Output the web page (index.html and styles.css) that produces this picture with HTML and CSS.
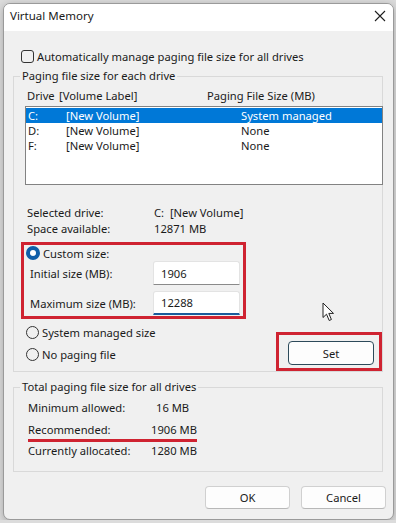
FILE: index.html
```html
<!DOCTYPE html>
<html lang="en">
<head>
    <meta charset="UTF-8">
    <meta name="viewport" content="width=device-width, initial-scale=1.0">
    <title>Virtual Memory</title>
    <link rel="stylesheet" href="styles.css">
</head>
<body>

    <div class="window">
        <!-- Barra de titulo -->
        <div class="titlebar">
            <span class="title">Virtual Memory</span>
            <svg class="close" width="12" height="12" viewBox="0 0 12 12">
                <path d="M1 1 L11 11 M11 1 L1 11" stroke="#1f1f1f" stroke-width="1.1" fill="none"/>
            </svg>
        </div>

        <div class="content">
            <div class="check-row"><span class="checkbox"></span>Automatically manage paging file size for all drives</div>

            <!-- Grupo: cada drive -->
            <fieldset class="group group-drive">
                <legend>Paging file size for each drive</legend>

                <div class="list-head">
                    <span class="col-drive">Drive</span>
                    <span class="col-label">[Volume Label]</span>
                    <span>Paging File Size (MB)</span>
                </div>

                <div class="drive-list">
                    <div class="drive-row selected"><span class="c1">C:</span><span class="c2">[New Volume]</span><span>System managed</span></div>
                    <div class="drive-row"><span class="c1">D:</span><span class="c2">[New Volume]</span><span>None</span></div>
                    <div class="drive-row"><span class="c1">F:</span><span class="c2">[New Volume]</span><span>None</span></div>
                </div>

                <div class="info">
                    <div class="info-row"><span class="info-label">Selected drive:</span><span>C:&nbsp; [New Volume]</span></div>
                    <div class="info-row"><span class="info-label">Space available:</span><span>12871 MB</span></div>
                </div>

                <div class="mark custom-box">
                    <div class="radio-row"><span class="radio checked"></span>Custom size:</div>
                    <div class="size-row"><span class="size-label">Initial size (MB):</span><div class="input">1906</div></div>
                    <div class="size-row"><span class="size-label">Maximum size (MB):</span><div class="input focused">12288</div></div>
                </div>

                <div class="bottom-row">
                    <div class="radio-list">
                        <div class="radio-row"><span class="radio"></span>System managed size</div>
                        <div class="radio-row"><span class="radio"></span>No paging file</div>
                    </div>
                    <div class="mark set-box"><button class="btn btn-default">Set</button></div>
                </div>
            </fieldset>

            <!-- Grupo: total -->
            <fieldset class="group group-total">
                <legend>Total paging file size for all drives</legend>
                <div class="total-row"><span class="total-label">Minimum allowed:</span><span>16 MB</span></div>
                <div class="total-row recommended"><span class="total-label">Recommended:</span><span>1906 MB</span></div>
                <div class="total-row"><span class="total-label">Currently allocated:</span><span>1280 MB</span></div>
            </fieldset>

            <div class="buttons">
                <button class="btn">OK</button>
                <button class="btn">Cancel</button>
            </div>
        </div>
    </div>

    <!-- Ponteiro do mouse -->
    <svg class="cursor" width="13" height="20" viewBox="0 0 13 20">
        <path d="M1 1 L1 15.5 L4.5 12.2 L7.2 18.5 L9.4 17.5 L6.8 11.4 L11.5 11.4 Z" fill="#fff" stroke="#222" stroke-width="1" stroke-linejoin="round"/>
    </svg>

</body>
</html>
```

FILE: styles.css
```css
/* Fundo atras da janela */
body {
    margin: 0;
    background: #dcdcdc;
    font-family: "Noto Sans", "Liberation Sans", sans-serif;
    font-size: 11.2px;
    color: #1a1a1a;
    white-space: nowrap;
    position: relative;
}

/* Janela */
.window {
    margin: 3px 0 0 3px;
    width: 391px;
    box-sizing: border-box;
    border: 1px solid #9a9a9a;
    border-radius: 7px;
    overflow: hidden;
    background: #f0f0f0;
    box-shadow: 0 2px 8px rgba(0, 0, 0, 0.25);
}

.titlebar {
    height: 27px;
    box-sizing: border-box;
    background: #ffffff;
    display: flex;
    align-items: center;
    justify-content: space-between;
    padding: 0 7px 4px 6px;
}

.title {
    font-size: 11.5px;
}

.close {
    display: block;
}

.content {
    padding: 17px 10px 10px 9px;
}

/* Checkbox */
.check-row {
    height: 16px;
    display: flex;
    align-items: center;
    margin-left: 8px;
}

.checkbox {
    width: 13px;
    height: 13px;
    box-sizing: border-box;
    border: 1px solid #333;
    border-radius: 3px;
    margin-right: 3px;
}

/* Caixas de grupo */
.group {
    margin: 4px 0 0 0;
    padding: 0;
    border: 1px solid #d9d9d9;
    min-width: 0;
}

.group legend {
    margin-left: 6px;
    padding: 0 2px;
    line-height: 16px;
}

.list-head {
    display: flex;
    height: 16px;
    align-items: center;
    margin: 3px 0 0 13px;
}

.col-drive {
    width: 32px;
}

.col-label {
    width: 148px;
}

/* Lista de drives */
.drive-list {
    margin: 3px -1px 0 11px;
    height: 79px;
    box-sizing: border-box;
    border: 1px solid #828282;
    background: #ffffff;
    padding-top: 1px;
}

.drive-row {
    display: flex;
    align-items: center;
    height: 15px;
    padding-left: 2px;
}

.drive-row.selected {
    background: #0078d7;
    color: #ffffff;
}

.c1 {
    width: 38px;
}

.c2 {
    width: 175px;
}

.info {
    margin: 19px 0 0 13px;
}

.info-row {
    display: flex;
    align-items: center;
    height: 16px;
}

.info-label {
    width: 127px;
}

/* Marcacoes vermelhas */
.mark {
    border: 3px solid #cf2331;
    box-sizing: border-box;
}

.custom-box {
    margin: 6px 0 0 7px;
    width: 225px;
    padding: 0 0 1px 0;
}

.radio-row {
    display: flex;
    align-items: center;
    height: 16px;
    padding-left: 2px;
}

.radio {
    width: 13px;
    height: 13px;
    box-sizing: border-box;
    border: 1px solid #333;
    border-radius: 50%;
    margin-right: 3px;
}

.radio.checked {
    width: 14px;
    height: 14px;
    border: 4.5px solid #0f5ea8;
    background: #ffffff;
}

.size-row {
    display: flex;
    align-items: center;
    padding-left: 6px;
}

.size-row + .size-row {
    margin-top: 6px;
}

.size-label {
    width: 123px;
}

.input {
    width: 87px;
    height: 24px;
    box-sizing: border-box;
    background: #ffffff;
    border: 1px solid #e3e3e3;
    border-bottom-color: #8a8a8a;
    border-radius: 3px 3px 0 0;
    padding: 0 7px;
    display: flex;
    align-items: center;
}

.input.focused {
    border-bottom: 2px solid #1a5c9c;
}

.bottom-row {
    display: flex;
    justify-content: space-between;
    align-items: flex-start;
    margin-top: 5px;
}

.radio-list {
    margin-left: 10px;
    display: flex;
    flex-direction: column;
    gap: 6px;
}

.set-box {
    margin-top: 8px;
    width: 106px;
    padding: 6px 4px 3px 9px;
}

/* Botoes */
.btn {
    display: block;
    width: 85px;
    height: 23px;
    padding: 0;
    font: inherit;
    color: #1a1a1a;
    background: #fdfdfd;
    border: 1px solid #d0d0d0;
    border-bottom-color: #b8b8b8;
    border-radius: 4px;
}

.btn-default {
    width: 86px;
    height: 24px;
    border: 1px solid #2d4a5a;
}

/* Grupo total */
.group-total {
    margin-top: 7px;
    padding: 2px 0 9px 0;
}

.total-row {
    display: flex;
    align-items: center;
    height: 21.5px;
    margin-left: 14px;
    width: 169px;
    position: relative;
}

.total-label {
    width: 128px;
}

.recommended::after {
    content: "";
    position: absolute;
    left: 0;
    right: 0;
    bottom: -2px;
    height: 3px;
    background: #cf2331;
}

.buttons {
    display: flex;
    justify-content: flex-end;
    gap: 11px;
    margin: 14px -3px 0 0;
}

.cursor {
    position: absolute;
    left: 322px;
    top: 302px;
}
```
